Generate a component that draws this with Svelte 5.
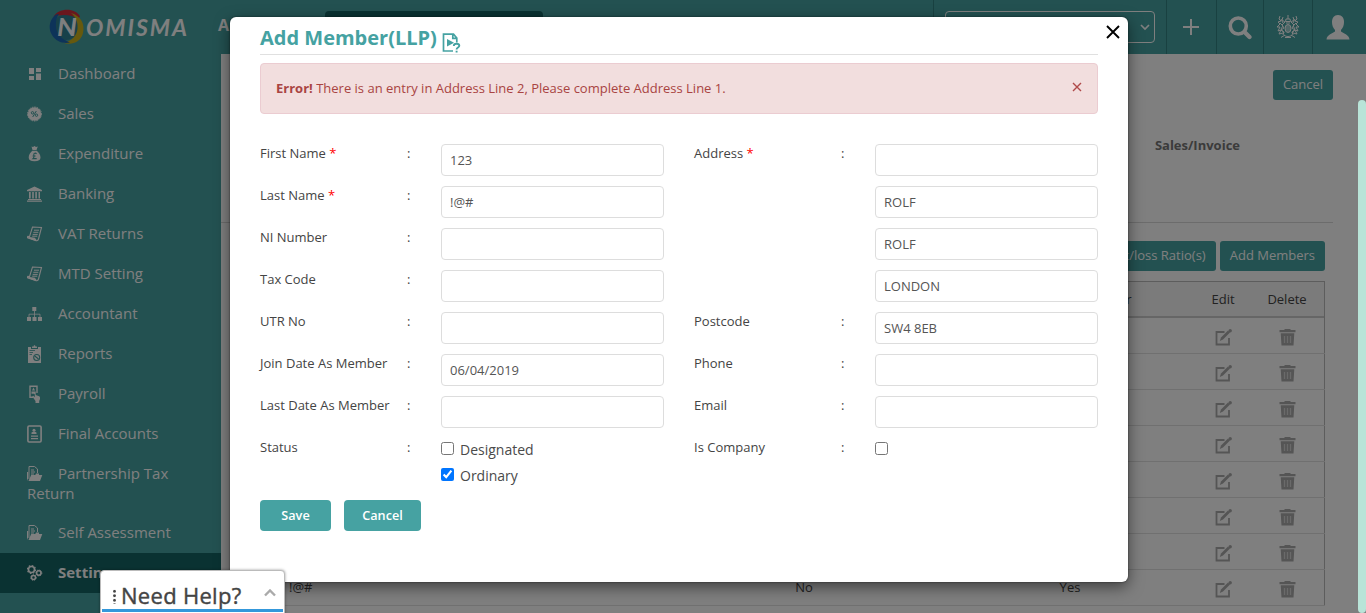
<script>
  const menu = [
    { label: 'Dashboard', icon: 'dash' },
    { label: 'Sales', icon: 'sales' },
    { label: 'Expenditure', icon: 'bag' },
    { label: 'Banking', icon: 'bank' },
    { label: 'VAT Returns', icon: 'scroll' },
    { label: 'MTD Setting', icon: 'scroll' },
    { label: 'Accountant', icon: 'tree' },
    { label: 'Reports', icon: 'clip' },
    { label: 'Payroll', icon: 'hand' },
    { label: 'Final Accounts', icon: 'book' },
    { label: 'Partnership Tax Return', icon: 'folder' },
    { label: 'Self Assessment', icon: 'folder' },
    { label: 'Settings', icon: 'gears', active: true }
  ];
  const left = [
    { label: 'First Name', req: true, value: '123' },
    { label: 'Last Name', req: true, value: '!@#' },
    { label: 'NI Number', value: '' },
    { label: 'Tax Code', value: '' },
    { label: 'UTR No', value: '' },
    { label: 'Join Date As Member', value: '06/04/2019' },
    { label: 'Last Date As Member', value: '' }
  ];
  const right = [
    { label: 'Address', req: true, value: '' },
    { label: '', value: 'ROLF' },
    { label: '', value: 'ROLF' },
    { label: '', value: 'LONDON' },
    { label: 'Postcode', value: 'SW4 8EB' },
    { label: 'Phone', value: '' },
    { label: 'Email', value: '' }
  ];
  const members = [{}, {}, {}, {}, {}, {}, {}, { name: '!@#', company: 'No', designated: 'Yes' }];
</script>

{#snippet glyph(name)}
  <svg class="glyph" width="16" height="18" viewBox="0 0 16 18" fill="currentColor">
    {#if name === 'dash'}
      <path d="M2 3h5v6H2zM9 3h5v4H9zM2 11h5v4H2zM9 8.500h5V15H9z" />
    {:else if name === 'sales'}
      <circle cx="7.500" cy="9" r="6.800" />
      <circle cx="7.500" cy="9" r="7" fill="none" stroke="currentColor" stroke-width="1" stroke-dasharray="1.500 1" />
      <g stroke="#46a2a2" fill="none" stroke-width="1"><circle cx="5.500" cy="7.800" r="1.200" /><circle cx="9.500" cy="10.200" r="1.200" /><path d="M9.300 6 5.700 12" /></g>
    {:else if name === 'bag'}
      <path d="M4.500 1.500 6 2l1.500-1L9 2l1.800-.5L9.500 5h-4zM5.300 5.800h4.500c2 2 3.700 4 3.700 6.700 0 2.500-2 3.700-6 3.700s-5.800-1.200-5.800-3.700c0-2.700 1.600-4.700 3.600-6.700z" />
      <path d="M9.500 9c-.8-1.500-3-1-2.700.8l.2 1.800c0 1-.4 1.500-1 2h3.700M5.600 11h3" fill="none" stroke="#46a2a2" stroke-width="1.100" />
    {:else if name === 'bank'}
      <path d="M7.500 1.500 15 5v1.300H0V5zM2 7h1.700v6.500H2zM5.200 7h1.600v6.500H5.200zM8.300 7h1.600v6.500H8.300zM11.500 7H13v6.500h-1.500zM1 14h13v1H1zM0 15.500h15v1.200H0z" />
    {:else if name === 'scroll'}
      <path d="M5.500 2 14.500 2.500l-3 11.500c-.4 1.600-1.800 2-3 1.500L1 13c-.8-.5-.8-1.300-.2-1.600l1.700.2z" fill="none" stroke="currentColor" stroke-width="1.100" />
      <path d="m.8 11.800 7 .9c.8.200.8 2 2 2.200l-1 1L1.500 13.300z" />
      <path d="M7 5.200h5M6.300 7.300h5M5.700 9.400h5M5.200 11.200h5" stroke="currentColor" stroke-width="1" />
    {:else if name === 'tree'}
      <path d="M5.300 2h4v4h-4zM0 12h4v4H0zM5.500 12h4v4h-4zM11 12h4v4h-4z" />
      <path d="M7.500 6v6M2 12V9.200h11V12" fill="none" stroke="currentColor" stroke-width=".8" />
    {:else if name === 'clip'}
      <path d="M1 2h3v2h7V2h3v16H1zM5 1.500h1.500L7 .2h1L8.500 1.500H10V3H5z" />
      <g stroke="#46a2a2" fill="none" stroke-width="1.100"><path d="M2.500 5.500H8M2.500 7.500H6M2.500 9.500H5" stroke-width=".8" /><circle cx="9.700" cy="12.500" r="3" /><path d="m7.800 11 3.700 3" /></g>
    {:else if name === 'hand'}
      <path d="M10 8V1.200H3v11h3" fill="none" stroke="currentColor" stroke-width="1.400" />
      <path d="M6.500 2.500 8 5.500H5zM4.500 6.500h4v2.200h-4zM7 9c.8-.8 1.700 0 1.700.8M8.700 6.500v3.500l3.500 1.300c.8.400 1 1.300.8 2.700l-.8 2v2H8.500V16L5.300 11.500l1-.7 1.500 1.400V8z" />
    {:else if name === 'book'}
      <rect x=".9" y="1" width="13.200" height="16" rx="1.200" fill="none" stroke="currentColor" stroke-width="1.600" />
      <circle cx="7" cy="5.300" r="1.500" /><path d="M4.500 9V7.500l1.500-.8h2l1.500.8V9zM4 10.500h7v1.200H4zM4 13h7v1.200H4z" />
    {:else if name === 'folder'}
      <path d="M2 14V1.500h5.500L10.500 4v4M4 5h3M4 7h4M4 9h3" fill="none" stroke="currentColor" stroke-width="1" />
      <path d="M0 7h1.200v6L0 16zM4.200 10h4l1-1.500H12V10h3.300L13 16H1.500z" />
    {:else}
      <g fill="none" stroke="currentColor">
        <circle cx="4.500" cy="5.500" r="3" stroke-width="1.600" /><circle cx="4.500" cy="5.500" r="4" stroke-width="1.200" stroke-dasharray="1.600 1.500" />
        <circle cx="11.800" cy="9" r="2.200" stroke-width="1.500" /><circle cx="11.800" cy="9" r="3" stroke-width="1" stroke-dasharray="1.200 1.200" />
        <circle cx="6.500" cy="13.500" r="2" stroke-width="1.500" /><circle cx="6.500" cy="13.500" r="2.800" stroke-width="1" stroke-dasharray="1.200 1.200" />
      </g>
    {/if}
  </svg>
{/snippet}

{#snippet field(f)}
  <div class="row">
    <span class="label">{f.label}{#if f.req}&nbsp;<b class="req">*</b>{/if}</span>
    <span class="colon">{f.label ? ':' : ''}</span>
    <input type="text" value={f.value} />
  </div>
{/snippet}

<div class="screen">
  <header>
    <svg class="logo" width="140" height="40" viewBox="0 0 140 40">
      <circle cx="17" cy="20" r="13" fill="#2f8294" />
      <path d="M4.500 10C9 1 26 0 31 9.500L29 12C23 7 11 7 4.500 10z" fill="#d22f3c" />
      <path d="M22 6c10 3 14 11 12 20-2 9-12 13-20 9.500 9-1 14-7 14.500-14C29 15 27 10 22 6z" fill="#cdb21d" />
      <path d="M7 7.500C0 13 -1 22 3 28c4 7 12 9 18 7.500C12 32 7.500 27 7 20c-.4-5 0-9 3-13z" fill="#1b66b3" />
      <text x="8" y="28.500" font-size="24" font-weight="700" textLength="20" lengthAdjust="spacingAndGlyphs">N</text>
      <text x="37" y="28.500" font-size="23" font-weight="700" textLength="101" lengthAdjust="spacing">OMISMA</text>
    </svg>
    <strong class="company">A</strong>
    <div class="nav-box"></div>
    <div class="select-cell">
      <div class="select">
        <svg width="10" height="7" viewBox="0 0 10 7"><path d="m1 1 4 4 4-4" fill="none" stroke="#fff" stroke-width="1.700" /></svg>
      </div>
    </div>
    <div class="tool plus"><svg width="16" height="16" viewBox="0 0 16 16"><path d="M8 0v16M0 8h16" stroke="#fff" stroke-width="2" /></svg></div>
    <div class="tool search"><svg width="24" height="24" viewBox="0 0 24 24" fill="none" stroke="#fff"><circle cx="10.300" cy="10" r="8" stroke-width="3.600" /><path d="m16.500 16 5 5" stroke-width="4.200" stroke-linecap="round" /></svg></div>
    <div class="tool crest">
      <svg width="24" height="24" viewBox="0 0 24 24" fill="none" stroke="#fff" stroke-width="1">
        <ellipse cx="12" cy="13.500" rx="3" ry="4" fill="#fff" fill-opacity=".5" /><path d="M12 0v4M9.500 6.500l.5-2.500h4l.5 2.500zM10 8h4M8 20c2 2 6 2 8 0M9 22.500h6M5 22.500l4-2.500M19 22.500l-4-2.500" />
        <path d="M4 1 3 4l2 2-3 1 2 2-3 3 3 0-2 4 3-1-2 4 4-1M7 2 6 5l3 2-3 3 2 3-3 2 3 2-1 3M5 4l2 4M4 8l3 3-2 3 3 4" />
        <path d="m20 1 1 3-2 2 3 1-2 2 3 3h-3l2 4-3-1 2 4-4-1M17 2l1 3-3 2 3 3-2 3 3 2-3 2 1 3M19 4l-2 4M20 8l-3 3 2 3-3 4" />
      </svg>
    </div>
    <div class="tool user"><svg width="24" height="25" viewBox="0 0 24 25" fill="#fff"><path d="M12 0c4 0 6 3 6 7 0 3-1 6-3 8v1.500c3 2.500 8 3 8.500 8H.5C1 19.500 6 19 9 16.500V15C7 13 6 10 6 7c0-4 2-7 6-7z" /></svg></div>
  </header>
  <div class="body">
    <nav>
      {#each menu as m}
        <div class="item" class:active={m.active}>{@render glyph(m.icon)}<span>{m.label}</span></div>
      {/each}
    </nav>
    <main>
      <div class="top"><button>Cancel</button></div>
      <div class="heading">Sales/Invoice</div>
      <div class="actions"><button>Profit/loss Ratio(s)</button><button>Add Members</button></div>
      <div class="table">
        <div class="tr th"><span></span><span></span><span>Designated Member</span><span>Edit</span><span class="del">Delete</span></div>
        {#each members as m}
          <div class="tr">
            <span class="name">{m.name ?? ''}</span><span>{m.company ?? ''}</span><span>{m.designated ?? ''}</span>
            <span><svg width="17" height="17" viewBox="0 0 17 17"><path d="M9.500 3H1.500v12.500H14V9" fill="none" stroke="#aaa" stroke-width="1.800" /><path d="m4.800 12 1.200-3.500 7-7 2 2-7 7z" fill="#aaa" /><circle cx="15.200" cy="1.800" r="1.700" fill="#aaa" /></svg></span>
            <span class="del"><svg width="17" height="17" viewBox="0 0 17 17"><path d="M5.500 0h6v1H16.500v2.300H.5V1h5zM1.700 4.300h13.600L14.500 16.500h-12z" fill="#aaa" /><path d="M5.500 7v7M8.500 7v7M11.500 7v7" stroke="#d4d4d4" stroke-width="1.300" /></svg></span>
          </div>
        {/each}
      </div>
    </main>
  </div>

  <div class="overlay"></div>
  <div class="scrollbar"></div>

  <section class="modal">
    <button class="close" aria-label="Close"><svg width="14" height="14" viewBox="0 0 14 14"><path d="m1 1 12 12M13 1 1 13" stroke="#000" stroke-width="1.900" /></svg></button>
    <h1>Add Member(LLP)
      <svg width="19" height="20" viewBox="0 0 19 20" fill="none" stroke="#45a2a2"><path d="M11 18H1.500V1.200h10L14.800 5v4.500M10.800 1v4.300h4" stroke-width="1.700" /><path d="M5 6v7.500l7-3.700z" fill="#45a2a2" stroke="none" /><path d="M11.800 13c0-3 5.500-2.800 5.500-.2 0 1.800-2.700 1.700-2.700 3.700M14.600 17.700v1.800" stroke-width="1.900" /></svg>
    </h1>
    <div class="alert"><p><b>Error!</b> There is an entry in Address Line 2, Please complete Address Line 1.</p>
      <svg width="10" height="10" viewBox="0 0 10 10"><path d="m1 1 8 8M9 1 1 9" stroke="#b04a4a" stroke-width="1.400" /></svg></div>
    <div class="form">
      <div class="col">
        {#each left as f}{@render field(f)}{/each}
        <div class="row"><span class="label">Status</span><span class="colon">:</span>
          <div class="checks"><label><input type="checkbox" />Designated</label><label><input type="checkbox" checked />Ordinary</label></div>
        </div>
      </div>
      <div class="col">
        {#each right as f}{@render field(f)}{/each}
        <div class="row"><span class="label">Is Company</span><span class="colon">:</span>
          <div class="checks"><label><input type="checkbox" aria-label="Is Company" /></label></div>
        </div>
      </div>
    </div>
    <div class="buttons"><button class="save">Save</button><button>Cancel</button></div>
  </section>

  <aside class="help">
    <div class="help-row"><span class="dots"></span><span class="help-text">Need Help?</span>
      <svg width="12" height="8" viewBox="0 0 12 8"><path d="m1 6.500 5-5 5 5" fill="none" stroke="#aaa" stroke-width="2.400" /></svg></div>
  </aside>
</div>

<style>
  :global(body) { margin: 0; overflow: hidden; }
  .screen, .screen * { box-sizing: border-box; }
  .screen { position: relative; width: 1366px; height: 613px; overflow: hidden; background: #fff; font-family: "Open Sans", sans-serif; font-size: 13px; color: #333; }
  header { display: flex; height: 54px; background: #46a2a2; color: #fff; }
  .logo { margin: 7px 0 0 49px; flex: none; }
  .logo text { font-family: Lato, sans-serif; font-style: italic; fill: #fff; }
  .company { width: 107px; margin-left: 29px; padding-top: 14px; font-size: 16px; line-height: 22px; }
  .nav-box { width: 218px; height: 32px; margin: 11px 390px 0 0; border-radius: 4px; background: #146565; flex: none; }
  .select-cell { width: 233px; padding: 11px 11px 0; border-left: 1px solid #328282; flex: none; }
  .select { height: 32px; border: 1px solid #fff; border-radius: 4px; display: flex; justify-content: flex-end; align-items: center; padding-right: 4px; }
  .tool { display: flex; align-items: center; justify-content: center; border-left: 1px solid #328282; flex: none; }
  .plus { width: 50px; padding-right: 2px; } .search { width: 47px; } .crest { width: 49px; } .user { width: 54px; padding-right: 3px; }
  .search svg { margin-top: 2px; }
  .user svg { margin-top: 1px; }
  .body { display: flex; height: 559px; }
  nav { width: 221px; height: 560px; margin-top: -1px; background: #46a2a2; color: #fff; font-size: 15px; line-height: 20px; flex: none; }
  .item { padding: 10px 40px 10px 27px; }
  .item:nth-child(n+12) { padding: 9px 40px 11px 27px; }
  .glyph { vertical-align: -3px; margin: -2px 15px -2px 0; }
  .glyph { transform: translateY(-1px); }
  .active { background: #146565; font-weight: 700; }
  main { flex: 1; min-width: 0; padding: 16px 33px 0 0; }
  main button, .buttons button { border: 0; border-radius: 3px; background: #46a2a2; color: #fff; font: 13px "Open Sans", sans-serif; }
  main button { height: 30px; padding: 0 10px 2px; }
  .top { display: flex; justify-content: flex-end; }
  .top button { width: 60px; padding: 0 0 2px; }
  .heading { display: flex; justify-content: flex-end; height: 123px; padding: 36px 93px 0 0; border-bottom: 1px solid #d8d8d8; line-height: 18px; color: #777; font-weight: 700; }
  .actions { display: flex; justify-content: flex-end; gap: 4px; padding: 18px 8px 0 0; }
  .table { margin: 10px 8px 0 30px; border: 1px solid #bbb; border-bottom: 0; color: #444; }
  .tr { display: grid; grid-template-columns: 420px 264px 268px 38px 1fr; height: 36px; align-items: center; border-bottom: 1px solid #e0e0e0; text-align: center; margin-right: -1px; }
  .tr span { line-height: 18px; padding-bottom: 2px; }
  .tr .del { padding-left: 8px; }
  .tr svg { display: block; margin: 5px auto 0; }
  .tr .name { text-align: left; padding-left: 37px; }
  .th { background: #f6f6f6; border-bottom: 2px solid #ccc; margin-right: 0; }
  .th span { padding-bottom: 0; }
  .overlay { position: absolute; inset: 0; background: rgba(0, 0, 0, .5); }
  .scrollbar { position: absolute; left: 1358px; top: 100px; width: 8px; height: 513px; background: #b9e4d8; border-radius: 4px; }
  .modal { position: absolute; left: 230px; top: 17px; width: 898px; height: 565px; padding: 5px 30px; background: #fff; border-radius: 6px; box-shadow: 0 5px 15px rgba(0, 0, 0, .5), 0 0 2px rgba(0, 0, 0, .6); }
  .close { position: absolute; right: 8px; top: 8px; padding: 0; border: 0; background: none; width: 14px; height: 14px; }
  .close svg { display: block; }
  h1 { display: flex; gap: 5px; height: 33px; margin: 0; border-bottom: 1px solid #e0e0e0; font-size: 20px; line-height: 32px; font-weight: 700; color: #45a2a2; }
  h1 svg { margin-top: 11px; }
  .alert { display: flex; justify-content: space-between; height: 51px; margin-top: 8px; padding: 15px 15px 0; border: 1px solid #ebccd1; border-radius: 4px; background: #f2dede; color: #a94442; }
  .alert p { margin: 0; line-height: 18px; }
  .alert svg { margin-top: 3px; }
  .form { display: grid; grid-template-columns: 404px 404px; column-gap: 30px; padding-top: 30px; }
  .row { display: grid; grid-template-columns: 147px 34px 223px; height: 42px; }
  .label, .colon { line-height: 18px; white-space: nowrap; color: #444; }
  .req { font-weight: 400; color: red; }
  .row input[type='text'] { width: 223px; height: 32px; border: 1px solid #ddd; border-radius: 4px; padding: 0 8px; color: #555; font: 13px "Open Sans", sans-serif; }
  .checks { display: flex; flex-direction: column; padding-top: 2px; color: #4a4a4a; }
  .checks label { display: flex; height: 26px; font-size: 14px; line-height: 20px; flex: none; }
  .checks input { width: 13px; height: 13px; margin: 2px 6px 0 0; }
  .buttons { display: flex; gap: 13px; padding-top: 20px; }
  .buttons button { width: 77px; height: 31px; padding: 0 0 2px; font-weight: 600; font-size: 12.700px; border-radius: 4px; }
  .buttons .save { width: 71px; }
  .help { position: absolute; left: 100px; top: 570px; width: 185px; height: 46px; padding: 1px; border: 1px solid #bbb; border-radius: 4px 4px 0 0; background: #fff; box-shadow: 0 0 3px rgba(0, 0, 0, .4); }
  .help-row { display: flex; height: 40px; border-bottom: 3px solid #3498db; color: #444; }
  .dots { width: 3px; margin: 17px 5px 5px 11px; background: radial-gradient(circle, #444 1.200px, transparent 1.500px) 0 0 / 3px 4.500px; }
  .help-text { width: 143px; font-size: 22px; line-height: 46px; letter-spacing: .3px; -webkit-text-stroke: .4px #444; }
  .help svg { margin-top: 17px; }
</style>
